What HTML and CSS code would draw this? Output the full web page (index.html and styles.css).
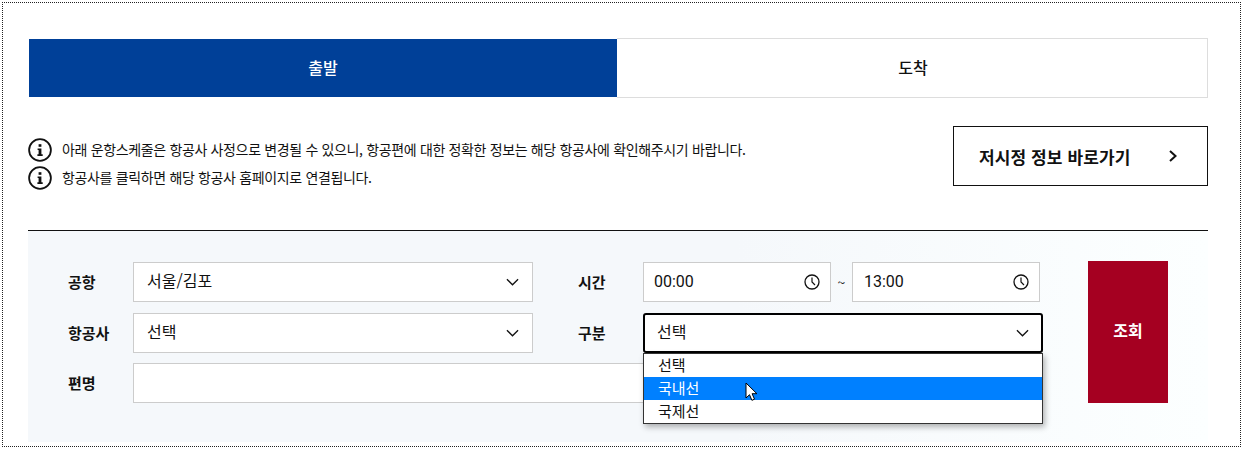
FILE: index.html
```html
<!DOCTYPE html>
<html lang="ko">
<head>
<meta charset="utf-8">
<title>운항스케줄</title>
<link rel="stylesheet" href="styles.css">
</head>
<body>
<div class="frame">
  <div class="tabs">
    <a class="tab tab-active">출발</a>
    <a class="tab">도착</a>
  </div>
  <div class="info">
    <ul class="notes">
      <li class="note">
        <svg class="info-icon" viewBox="0 0 24 24"><circle cx="12" cy="12" r="10.9" fill="none" stroke="#111" stroke-width="1.8"/><rect x="10.6" y="6.2" width="2.8" height="2.6" fill="#111"/><path d="M9.6 10.4h3.8v5.9h1.3v1.7H9.4v-1.7h1.2v-4.2h-1z" fill="#111"/></svg>
        <span>아래 운항스케줄은 항공사 사정으로 변경될 수 있으니, 항공편에 대한 정확한 정보는 해당 항공사에 확인해주시기 바랍니다.</span>
      </li>
      <li class="note">
        <svg class="info-icon" viewBox="0 0 24 24"><circle cx="12" cy="12" r="10.9" fill="none" stroke="#111" stroke-width="1.8"/><rect x="10.6" y="6.2" width="2.8" height="2.6" fill="#111"/><path d="M9.6 10.4h3.8v5.9h1.3v1.7H9.4v-1.7h1.2v-4.2h-1z" fill="#111"/></svg>
        <span>항공사를 클릭하면 해당 항공사 홈페이지로 연결됩니다.</span>
      </li>
    </ul>
    <a class="link-btn">
      <span>저시정 정보 바로가기</span>
      <svg class="link-arrow" viewBox="0 0 10 14"><path d="M2 2l5.5 5L2 12" fill="none" stroke="#111" stroke-width="2"/></svg>
    </a>
  </div>
  <div class="panel">
    <div class="form">
      <div class="row row-first">
        <label class="label">공항</label>
        <div class="field select"><span class="value">서울/김포</span><svg class="chev" viewBox="0 0 14 8"><path d="M1 1l6 6 6-6" fill="none" stroke="#111" stroke-width="1.4"/></svg></div>
        <label class="label label-right">시간</label>
        <div class="field time"><span class="value">00:00</span><svg class="clock" viewBox="0 0 16 16"><circle cx="8" cy="8" r="7" fill="none" stroke="#111" stroke-width="1.3"/><path d="M8 3.5V8l3 3" fill="none" stroke="#111" stroke-width="1.2"/></svg></div>
        <span class="tilde">~</span>
        <div class="field time time-end"><span class="value">13:00</span><svg class="clock" viewBox="0 0 16 16"><circle cx="8" cy="8" r="7" fill="none" stroke="#111" stroke-width="1.3"/><path d="M8 3.5V8l3 3" fill="none" stroke="#111" stroke-width="1.2"/></svg></div>
      </div>
      <div class="row">
        <label class="label">항공사</label>
        <div class="field select"><span class="value">선택</span><svg class="chev" viewBox="0 0 14 8"><path d="M1 1l6 6 6-6" fill="none" stroke="#111" stroke-width="1.4"/></svg></div>
        <label class="label label-right">구분</label>
        <div class="select-wrap">
          <div class="field select focused"><span class="value">선택</span><svg class="chev" viewBox="0 0 14 8"><path d="M1 1l6 6 6-6" fill="none" stroke="#111" stroke-width="1.4"/></svg></div>
          <ul class="dropdown">
            <li class="option">선택</li>
            <li class="option option-hover">국내선</li>
            <li class="option">국제선</li>
          </ul>
          <svg class="cursor" viewBox="0 0 13 20"><path d="M1 1v15l3.5-3.3 2.4 5.6 2.6-1.1-2.4-5.5h4.8z" fill="#fff" stroke="#000" stroke-width="1"/></svg>
        </div>
      </div>
      <div class="row">
        <label class="label">편명</label>
        <div class="field wide"></div>
      </div>
    </div>
    <button class="search">조회</button>
  </div>
</div>
</body>
</html>
```
FILE: styles.css
```css
* { box-sizing: border-box; }
html, body { margin: 0; padding: 0; background: #fff; }
body {
  font-family: "Noto Sans CJK KR", "Noto Sans", sans-serif;
  color: #111;
  overflow: hidden;
}
.frame {
  width: 1239px;
  height: 445px;
  margin: 2px 0 0 2px;
  border: 1px dotted #222;
  padding: 35px 32px 0 25px;
}
.tabs { display: flex; height: 60px; }
.tab {
  flex: 1;
  display: flex;
  align-items: center;
  justify-content: center;
  font-size: 16px;
  font-weight: 500;
  border: 1px solid #ddd;
  border-left: 0;
  padding: 0 0 3px 2px;
}
.tab-active {
  flex: 0 0 589px;
  background: #004098 padding-box;
  color: #fff;
  border: 1px solid #fff;
  border-right: 0;
  padding-left: 0;
}
.info {
  display: flex;
  justify-content: space-between;
  align-items: flex-start;
  margin-top: 28px;
  height: 105px;
  border-bottom: 1px solid #111;
}
.notes { list-style: none; margin: 10px 0 0; padding: 0; }
.note {
  display: flex;
  align-items: center;
  gap: 10px;
  height: 28px;
  font-size: 14px;
  letter-spacing: -0.35px;
}
.note span { padding-bottom: 2px; }
.info-icon { width: 24px; height: 24px; flex: none; }
.link-btn {
  display: flex;
  align-items: center;
  justify-content: space-between;
  width: 255px;
  height: 60px;
  padding: 0 29px 0 25px;
  border: 1px solid #111;
  font-size: 17px;
  font-weight: 700;
  letter-spacing: 0.1px;
}
.link-arrow { width: 10px; height: 14px; }
.panel {
  display: flex;
  align-items: flex-start;
  height: 211px;
  padding: 30px 40px 0 40px;
  background: linear-gradient(90deg, #f5f8fb 0%, #f5f8fb 60%, #fcffff 100%);
}
.form { margin-top: 1px; width: 975px; flex: none; }
.row { display: flex; align-items: center; height: 40px; margin-bottom: 10px; }
.row-first { margin-bottom: 11px; }
.label { width: 65px; flex: none; font-size: 15px; font-weight: 700; padding-bottom: 2px; }
.label-right { margin-left: 45px; }
.field {
  display: flex;
  align-items: center;
  justify-content: space-between;
  height: 40px;
  background: #fff;
  border: 1px solid #ccc;
  font-size: 16px;
}
.value { padding-bottom: 5px; }
.select { width: 400px; padding: 0 13px 0 13px; }
.time { width: 188px; padding: 0 10px; font-family: Roboto, sans-serif; font-size: 16px; }
.time .value { padding-bottom: 2px; }
.time-end { padding-left: 11px; }
.wide { width: 907px; }
.tilde { width: 21px; text-align: center; font-size: 14px; }
.chev { width: 13px; height: 8px; }
.clock { width: 16px; height: 16px; }
.select-wrap { position: relative; width: 400px; height: 40px; }
.focused { border: 2px solid #000; border-radius: 3px; padding-right: 12px; }
.focused .value { margin-left: -1px; }
.dropdown {
  position: absolute;
  top: 40px;
  left: 0;
  width: 400px;
  margin: 0;
  padding: 0;
  list-style: none;
  background: #fff;
  border: 1px solid #333;
  box-shadow: 2px 3px 6px rgba(0, 0, 0, 0.3);
  z-index: 2;
  font-size: 15px;
}
.option { height: 23px; line-height: 22px; padding-left: 14px; }
.option-hover { background: #0080ff; color: #fff; }
.cursor { position: absolute; left: 102px; top: 69px; width: 13px; height: 20px; z-index: 3; }
.search {
  flex: none;
  width: 80px;
  height: 142px;
  margin-left: 45px;
  border: 0;
  padding: 0 0 4px;
  background: #a50021;
  color: #fff;
  font-family: inherit;
  font-size: 16px;
  font-weight: 700;
}
```
